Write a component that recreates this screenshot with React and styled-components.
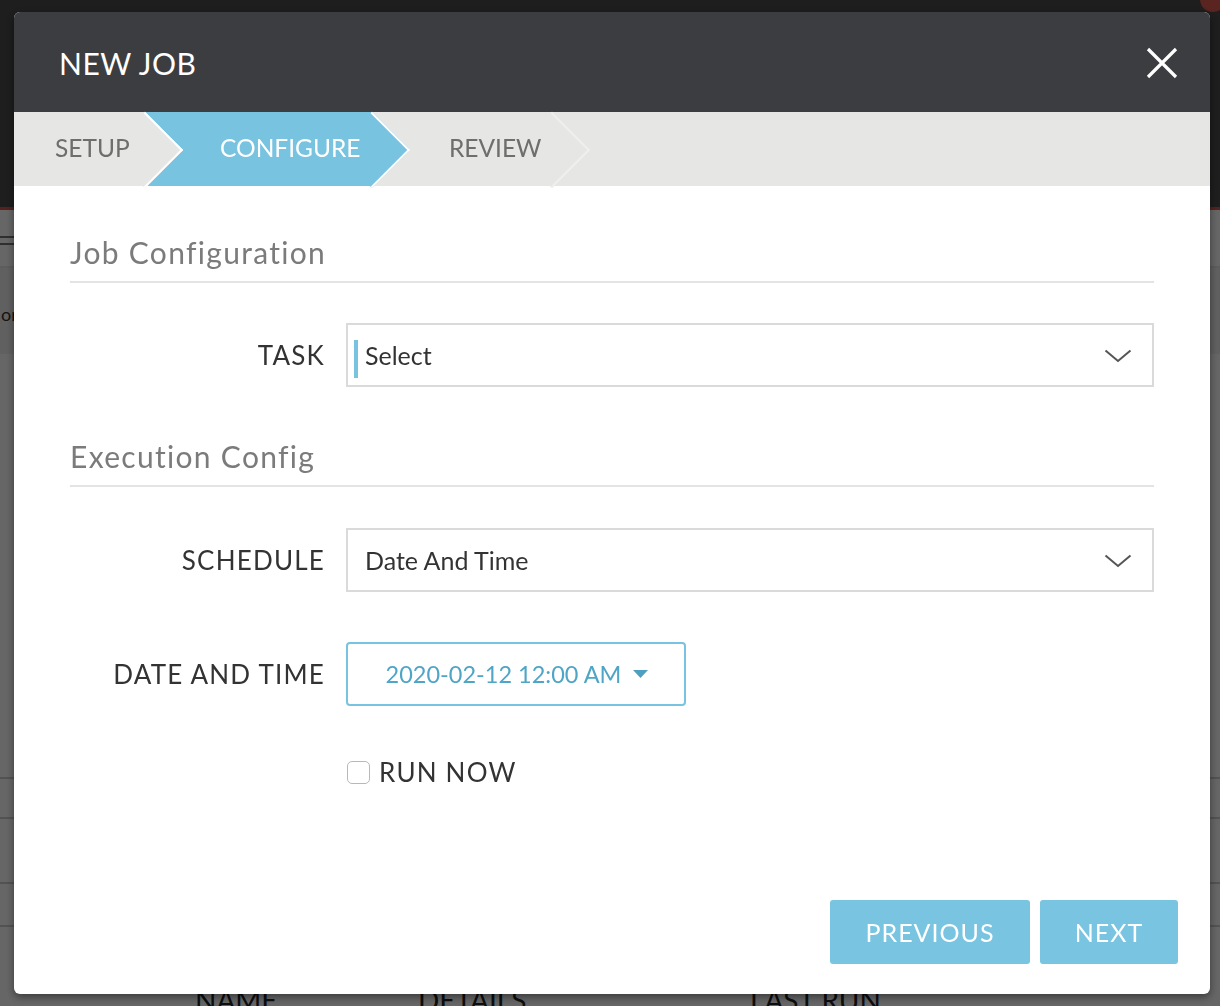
import styled, { createGlobalStyle } from "styled-components"

const GlobalStyle = createGlobalStyle`
    html, body {
        margin: 0;
        padding: 0;
        font-family: Lato, "Open Sans", sans-serif;
        background: #ffffff;
    }
    * {
        box-sizing: border-box;
    }
`

const steps = ["SETUP", "CONFIGURE", "REVIEW"]

const ChevronDown = () => (
    <svg width="28" height="14" viewBox="0 0 28 14" fill="none">
        <path d="M1.5 1.5 L14 12 L26.5 1.5" stroke="#555" strokeWidth="2" />
    </svg>
)

const CloseIcon = () => (
    <svg width="32" height="32" viewBox="0 0 32 32">
        <path d="M2 2 L30 30 M30 2 L2 30" stroke="#fff" strokeWidth="3.2" />
    </svg>
)

const Caret = () => (
    <svg width="15" height="8" viewBox="0 0 15 8">
        <path d="M0 0 H15 L7.5 8 Z" fill="#4f9fc0" />
    </svg>
)

const Backdrop = () => (
    <PageStyled>
        <div className="topnav">
            <span className="badge" />
        </div>
        <div className="subbar">
            <span className="burger" />
        </div>
        <div className="panel"><span>or</span></div>
        <div className="rows">
            <div className="row" style={{ height: 425 }} />
            <div className="row" style={{ height: 40 }} />
            <div className="row" style={{ height: 65 }} />
            <div className="row" style={{ height: 43 }} />
        </div>
        <div className="thead">
            <span style={{ width: 223 }}>NAME</span>
            <span style={{ width: 332 }}>DETAILS</span>
            <span>LAST RUN</span>
        </div>
    </PageStyled>
)

const PageStyled = styled.div`
    height: 1006px;
    overflow: hidden;
    display: flex;
    flex-direction: column;
    background: #ffffff;
    .topnav{
        height: 210px;
        flex-shrink: 0;
        background: #4b4b4b;
        border-bottom: 3px solid #d9534f;
        position: relative;
    }
    .badge{
        position: absolute;
        right: -6px;
        top: -14px;
        width: 26px;
        height: 26px;
        border-radius: 50%;
        background: #e05a50;
    }
    .subbar{
        height: 58px;
        flex-shrink: 0;
        padding: 26px 0 0;
        border-bottom: 2px solid #e8e8e8;
    }
    .burger{
        display: block;
        width: 14px;
        height: 9px;
        border-top: 2px solid #777;
        border-bottom: 2px solid #777;
    }
    .panel{
        height: 86px;
        flex-shrink: 0;
        background: #f1f1f1;
        display: flex;
        align-items: center;
        font-size: 18px;
        color: #333;
        padding: 6px 0 0 1px;
    }
    .rows{
        display: flex;
        flex-direction: column;
        flex-shrink: 0;
    }
    .row{
        border-bottom: 2px solid #cfcfcf;
    }
    .thead{
        display: flex;
        flex-shrink: 0;
        padding: 56px 0 0 195px;
        font-size: 28px;
        line-height: 34px;
        color: #222;
        span{
            display: inline-block;
        }
    }
`

export default function App() {
    return (
        <>
            <GlobalStyle />
            <Backdrop />
            <Overlay>
                <Modal>
                    <Header>
                        <h1>NEW JOB</h1>
                        <CloseButton><CloseIcon /></CloseButton>
                    </Header>
                    <Steps>
                        {steps.map((step, index) => (
                            <Step
                                key={step}
                                $active={index === 1}
                                $z={steps.length - index}
                                $faint={index === 2}
                                $pad={[41, 76, 78][index]}
                                $width={[130, 227, 180][index]}
                            >
                                <span>{step}</span>
                            </Step>
                        ))}
                    </Steps>
                    <Body>
                        <SectionTitle>Job Configuration</SectionTitle>
                        <FormRow $top={40}>
                            <Label>TASK</Label>
                            <SelectBox $focused>
                                <span>Select</span>
                                <ChevronDown />
                            </SelectBox>
                        </FormRow>
                        <SectionTitle $top={51}>Execution Config</SectionTitle>
                        <FormRow $top={41}>
                            <Label>SCHEDULE</Label>
                            <SelectBox>
                                <span>Date And Time</span>
                                <ChevronDown />
                            </SelectBox>
                        </FormRow>
                        <FormRow $top={50}>
                            <Label>DATE AND TIME</Label>
                            <DateButton>
                                2020-02-12 12:00 AM
                                <Caret />
                            </DateButton>
                        </FormRow>
                        <FormRow $top={50}>
                            <span />
                            <CheckLabel>
                                <input type="checkbox" />
                                <span className="box" />
                                RUN NOW
                            </CheckLabel>
                        </FormRow>
                    </Body>
                    <Footer>
                        <ActionButton $width={200}>PREVIOUS</ActionButton>
                        <ActionButton $width={138}>NEXT</ActionButton>
                    </Footer>
                </Modal>
            </Overlay>
        </>
    )
}

const Overlay = styled.div`
    position: fixed;
    inset: 0;
    background: rgba(0, 0, 0, 0.6);
    padding: 12px 0 0 14px;
`

const Modal = styled.div`
    width: 1196px;
    height: 982px;
    background: #ffffff;
    border-radius: 6px;
    overflow: hidden;
    display: flex;
    flex-direction: column;
    box-shadow: 0 3px 8px rgba(0, 0, 0, 0.45);
`

const Header = styled.div`
    height: 100px;
    flex-shrink: 0;
    background: #3c3d40;
    display: flex;
    align-items: center;
    justify-content: space-between;
    padding: 0 32px 0 45px;
    h1{
        margin: 0;
        color: #ffffff;
        font-size: 30px;
        font-weight: 400;
        letter-spacing: 0.5px;
        line-height: 1;
        padding-top: 2px;
    }
`

const CloseButton = styled.button`
    border: none;
    outline: none;
    background: none;
    padding: 0;
    width: 32px;
    height: 32px;
    margin-top: 2px;
    display: flex;
    cursor: pointer;
`

const Steps = styled.div`
    height: 74px;
    flex-shrink: 0;
    background: #e6e6e4;
    display: flex;
`

const Step = styled.div`
    position: relative;
    z-index: ${({ $z }) => $z};
    width: ${({ $width }) => $width}px;
    height: 100%;
    display: flex;
    align-items: center;
    padding-left: ${({ $pad }) => $pad}px;
    padding-bottom: 3px;
    font-size: 24.5px;
    color: ${({ $active }) => ($active ? "#ffffff" : "#6e6e6e")};
    background: ${({ $active }) => ($active ? "#77c3e0" : "#e6e6e4")};
    span{
        position: relative;
        z-index: 2;
        white-space: nowrap;
    }
    &::after{
        content: "";
        position: absolute;
        z-index: 1;
        top: 11px;
        left: calc(100% - 26px);
        width: 52px;
        height: 52px;
        background: inherit;
        transform: rotate(45deg);
        border-top: 2px solid ${({ $faint }) => ($faint ? "#efefed" : "#ffffff")};
        border-right: 2px solid ${({ $faint }) => ($faint ? "#efefed" : "#ffffff")};
    }
`

const Body = styled.div`
    flex: 1;
    padding: 48px 56px 0;
    display: flex;
    flex-direction: column;
`

const SectionTitle = styled.h2`
    margin: ${({ $top = 0 }) => $top}px 0 0;
    font-size: 30px;
    font-weight: 400;
    letter-spacing: 1.3px;
    color: #7b7b7b;
    line-height: 36px;
    padding-bottom: 11px;
    border-bottom: 2px solid #e4e4e4;
`

const FormRow = styled.div`
    margin-top: ${({ $top }) => $top}px;
    display: grid;
    grid-template-columns: 255px 1fr;
    column-gap: 21px;
    align-items: center;
`

const Label = styled.label`
    text-align: right;
    font-size: 26px;
    letter-spacing: 1.2px;
    color: #333333;
`

const SelectBox = styled.div`
    position: relative;
    height: 64px;
    border: 2px solid #dadada;
    display: flex;
    align-items: center;
    justify-content: space-between;
    padding: 0 20px 0 17px;
    font-size: 25px;
    color: #333333;
    svg{
        margin-top: 2px;
    }
    &::before{
        content: "";
        display: ${({ $focused }) => ($focused ? "block" : "none")};
        position: absolute;
        left: 6px;
        top: 15px;
        width: 4px;
        height: 38px;
        background: #77c3e0;
    }
`

const DateButton = styled.button`
    width: 340px;
    height: 64px;
    border: 2px solid #77c3e0;
    border-radius: 4px;
    background: #ffffff;
    outline: none;
    display: flex;
    align-items: center;
    justify-content: center;
    gap: 12px;
    font-family: inherit;
    font-size: 23.5px;
    color: #4ea5c6;
    padding: 0 0 0 2px;
`

const CheckLabel = styled.label`
    display: flex;
    align-items: center;
    gap: 9px;
    font-size: 26px;
    letter-spacing: 1.2px;
    color: #333333;
    input{
        display: none;
    }
    .box{
        width: 23px;
        height: 23px;
        margin-left: 1px;
        border: 1.5px solid #b8b8b8;
        border-radius: 5px;
        background: #ffffff;
    }
`

const Footer = styled.div`
    display: flex;
    justify-content: flex-end;
    gap: 10px;
    padding: 0 32px 30px;
`

const ActionButton = styled.button`
    width: ${({ $width }) => $width}px;
    height: 64px;
    border: none;
    outline: none;
    border-radius: 3px;
    background: #79c4e0;
    color: #ffffff;
    font-family: inherit;
    font-size: 25px;
    letter-spacing: 1px;
    cursor: pointer;
`
